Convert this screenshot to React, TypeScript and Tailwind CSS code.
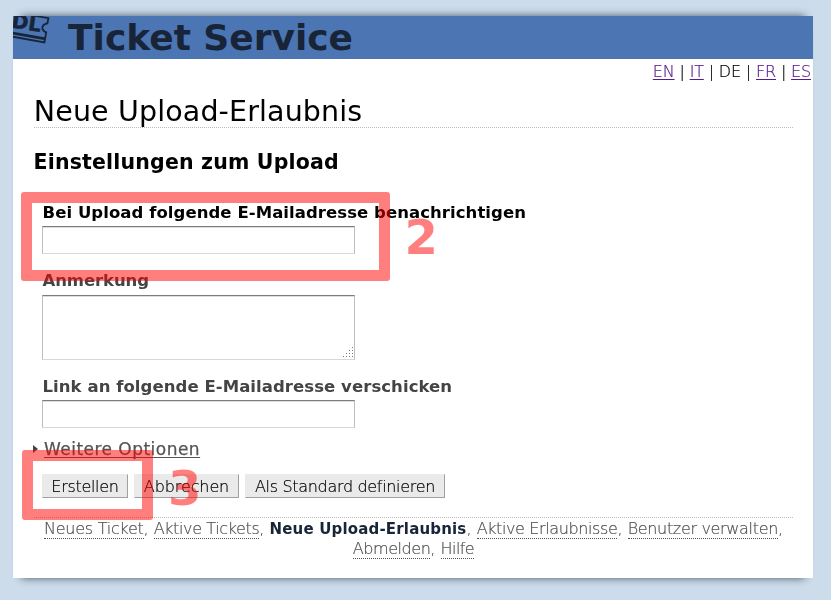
import React from "react";

const light = "font-['DejaVu_Sans_Light','DejaVu_Sans',sans-serif] font-extralight [-webkit-text-stroke:0.2px_currentColor]";

function Logo() {
  return (
    <svg className="block h-[43px] w-[40px]" viewBox="13 16 40 43" fill="none" stroke="#182438">
      <path d="M12 11.8L48.4 18.2L47.4 23.4Q43.4 24 42.4 27Q42 30.6 46.2 32.4L44.4 42.4L12 36.6" strokeWidth="1.8" />
      <path d="M12 33L45.6 38.9" strokeWidth="2.8" />
      <text x="11" y="27.6" transform="rotate(8 11 27.6)" fill="#182438" stroke="#182438" strokeWidth="0.5" fontFamily="DejaVu Sans, sans-serif" fontWeight="700" fontSize="20">DL</text>
    </svg>
  );
}

function Header() {
  return (
    <header className="flex h-[43px] overflow-hidden bg-[#4b75b3]">
      <Logo />
      <h1 className="ml-[15px] whitespace-nowrap text-[36px] font-bold leading-[43px] text-[#182438]">Ticket Service</h1>
    </header>
  );
}

function Languages() {
  const langs = ["EN", "IT", "DE", "FR", "ES"];
  return (
    <nav className={`h-[26px] pr-[2px] pt-[3px] text-right text-[16px] leading-5 tracking-[-0.17px] ${light}`}>
      {langs.map((l, i) => (
        <React.Fragment key={l}>
          {i > 0 && " | "}
          {l === "DE" ? l : <a className="text-[#551a8b] underline decoration-1 underline-offset-2 [text-decoration-skip-ink:none]">{l}</a>}
        </React.Fragment>
      ))}
    </nav>
  );
}

const field = "block w-[313px] resize-none border border-[#bebebe] border-t-[#7c7c7c] border-b-[#d8d8d8] bg-white shadow-[inset_0_1px_0_#dedede] outline-none";
const label = "block h-5 whitespace-nowrap pl-[0.5px] text-[16.5px] font-bold leading-5";

function Grip() {
  const dots = [[9, 0], [6, 3], [9, 3], [3, 6], [6, 6], [9, 6], [0, 9], [3, 9], [6, 9], [9, 9]];
  return (
    <svg className="absolute bottom-[3px] right-[2px] h-[10px] w-[10px]" viewBox="0 0 10 10" shapeRendering="crispEdges">
      {dots.map(([x, y]) => <rect key={`${x}-${y}`} x={x} y={y} width="1" height="1" fill="#777" />)}
    </svg>
  );
}

function Button({ children, className }: { children: string; className: string }) {
  return (
    <button className={`h-6 whitespace-nowrap border border-[#eaeaea] border-b-[#a0a0a0] border-r-[#a0a0a0] bg-[#eaeaea] pt-px text-[16px] leading-[22px] text-black ${light} ${className}`}>
      {children}
    </button>
  );
}

function FooterLink({ children, className = "tracking-[-0.33px]" }: { children: string; className?: string }) {
  return <a className={`border-b border-dotted border-[#505050] ${className}`}>{children}</a>;
}

export default function App() {
  return (
    <div className="relative h-[600px] w-[831px] overflow-hidden bg-[#ccdceb] px-[13px] pt-4 font-['DejaVu_Sans',sans-serif] text-black">
      <main className="h-[562px] w-[800px] bg-white opacity-[0.999] shadow-[0_8px_8px_-8px_#475769,0_-8px_8px_-8px_#475769]">
        <Header />
        <Languages />
        <div className="pl-[21px] pr-5">
          <h2 className="h-[43px] whitespace-nowrap border-b border-dotted border-[#bbb] text-[28.5px] leading-[53px] tracking-[0.13px]"><span className="-ml-[0.2px]">Neue Upload-Erlaubnis</span></h2>
          <h3 className="-ml-[0.5px] mt-[20px] h-[27px] whitespace-nowrap text-[20.5px] font-bold leading-[29px] tracking-[0.18px]">Einstellungen zum Upload</h3>
          <form className="pl-2 pt-[28px]">
            <label className={`tracking-[0.06px] ${label}`}>Bei Upload folgende E-Mailadresse benachrichtigen</label>
            <input className={`mt-[3px] h-7 ${field}`} />
            <label className={`mt-[17px] tracking-[-0.1px] text-[#444] ${label}`}>Anmerkung</label>
            <div className="relative mt-[4px] h-[65px] w-[313px]">
              <textarea className={`h-[65px] ${field}`} />
              <Grip />
            </div>
            <label className={`mt-[17px] tracking-[0.06px] text-[#444] ${label}`}>Link an folgende E-Mailadresse verschicken</label>
            <input className={`mt-[3px] h-7 ${field}`} />
          </form>
          <div className="-ml-px mt-[10px] flex h-[21px] items-center text-[17px] leading-[20px] tracking-[0.47px] text-[#555]">
            <svg className="mr-[6px] h-2 w-[5px]" viewBox="0 0 5 8"><path d="M0 0L5 4L0 8Z" fill="#444" /></svg>
            <a className="underline decoration-1 underline-offset-2 [-webkit-text-stroke:0.25px_#555] [text-decoration-skip-ink:none]">Weitere Optionen</a>
          </div>
          <div className="ml-2 mt-[15px] flex">
            <Button className="w-[86px] tracking-[-0.3px]">Erstellen</Button>
            <Button className="ml-[6px] w-[105px] tracking-[-0.1px]">Abbrechen</Button>
            <Button className="ml-[6px] w-[200px] tracking-[-0.32px]">Als Standard definieren</Button>
          </div>
          <footer className={`mt-[19px] border-t border-dotted border-[#bbb] pt-px text-center text-[16px] leading-5 text-[#505050] ${light}`}>
            <div className="whitespace-nowrap">
              <FooterLink className="tracking-[-0.25px]">Neues Ticket</FooterLink>, <FooterLink className="tracking-[-0.38px]">Aktive Tickets</FooterLink>,{" "}
              <b className="font-['DejaVu_Sans'] text-[15px] font-bold tracking-[0.17px] text-[#182438] [-webkit-text-stroke:0]">Neue Upload-Erlaubnis</b>, <FooterLink className="tracking-[-0.38px]">Aktive Erlaubnisse</FooterLink>,{" "}
              <FooterLink>Benutzer verwalten</FooterLink>,
            </div>
            <div><FooterLink className="tracking-[-0.45px]">Abmelden</FooterLink>, <FooterLink className="tracking-[-0.55px]">Hilfe</FooterLink></div>
          </footer>
        </div>
      </main>
      <div className="absolute left-[21px] top-[192px] h-[89px] w-[369px] rounded-[3px] border-[11px] border-[#ff0000]/50" />
      <div className="absolute left-[22px] top-[450px] h-[70px] w-[131px] rounded-[3px] border-[11px] border-[#ff0000]/50" />
      <span className="absolute left-[404.5px] top-[207px] text-[48px] font-bold leading-[60px] text-[#ff0000]/50">2</span>
      <span className="absolute left-[168px] top-[458px] text-[48px] font-bold leading-[60px] text-[#ff0000]/50">3</span>
    </div>
  );
}
